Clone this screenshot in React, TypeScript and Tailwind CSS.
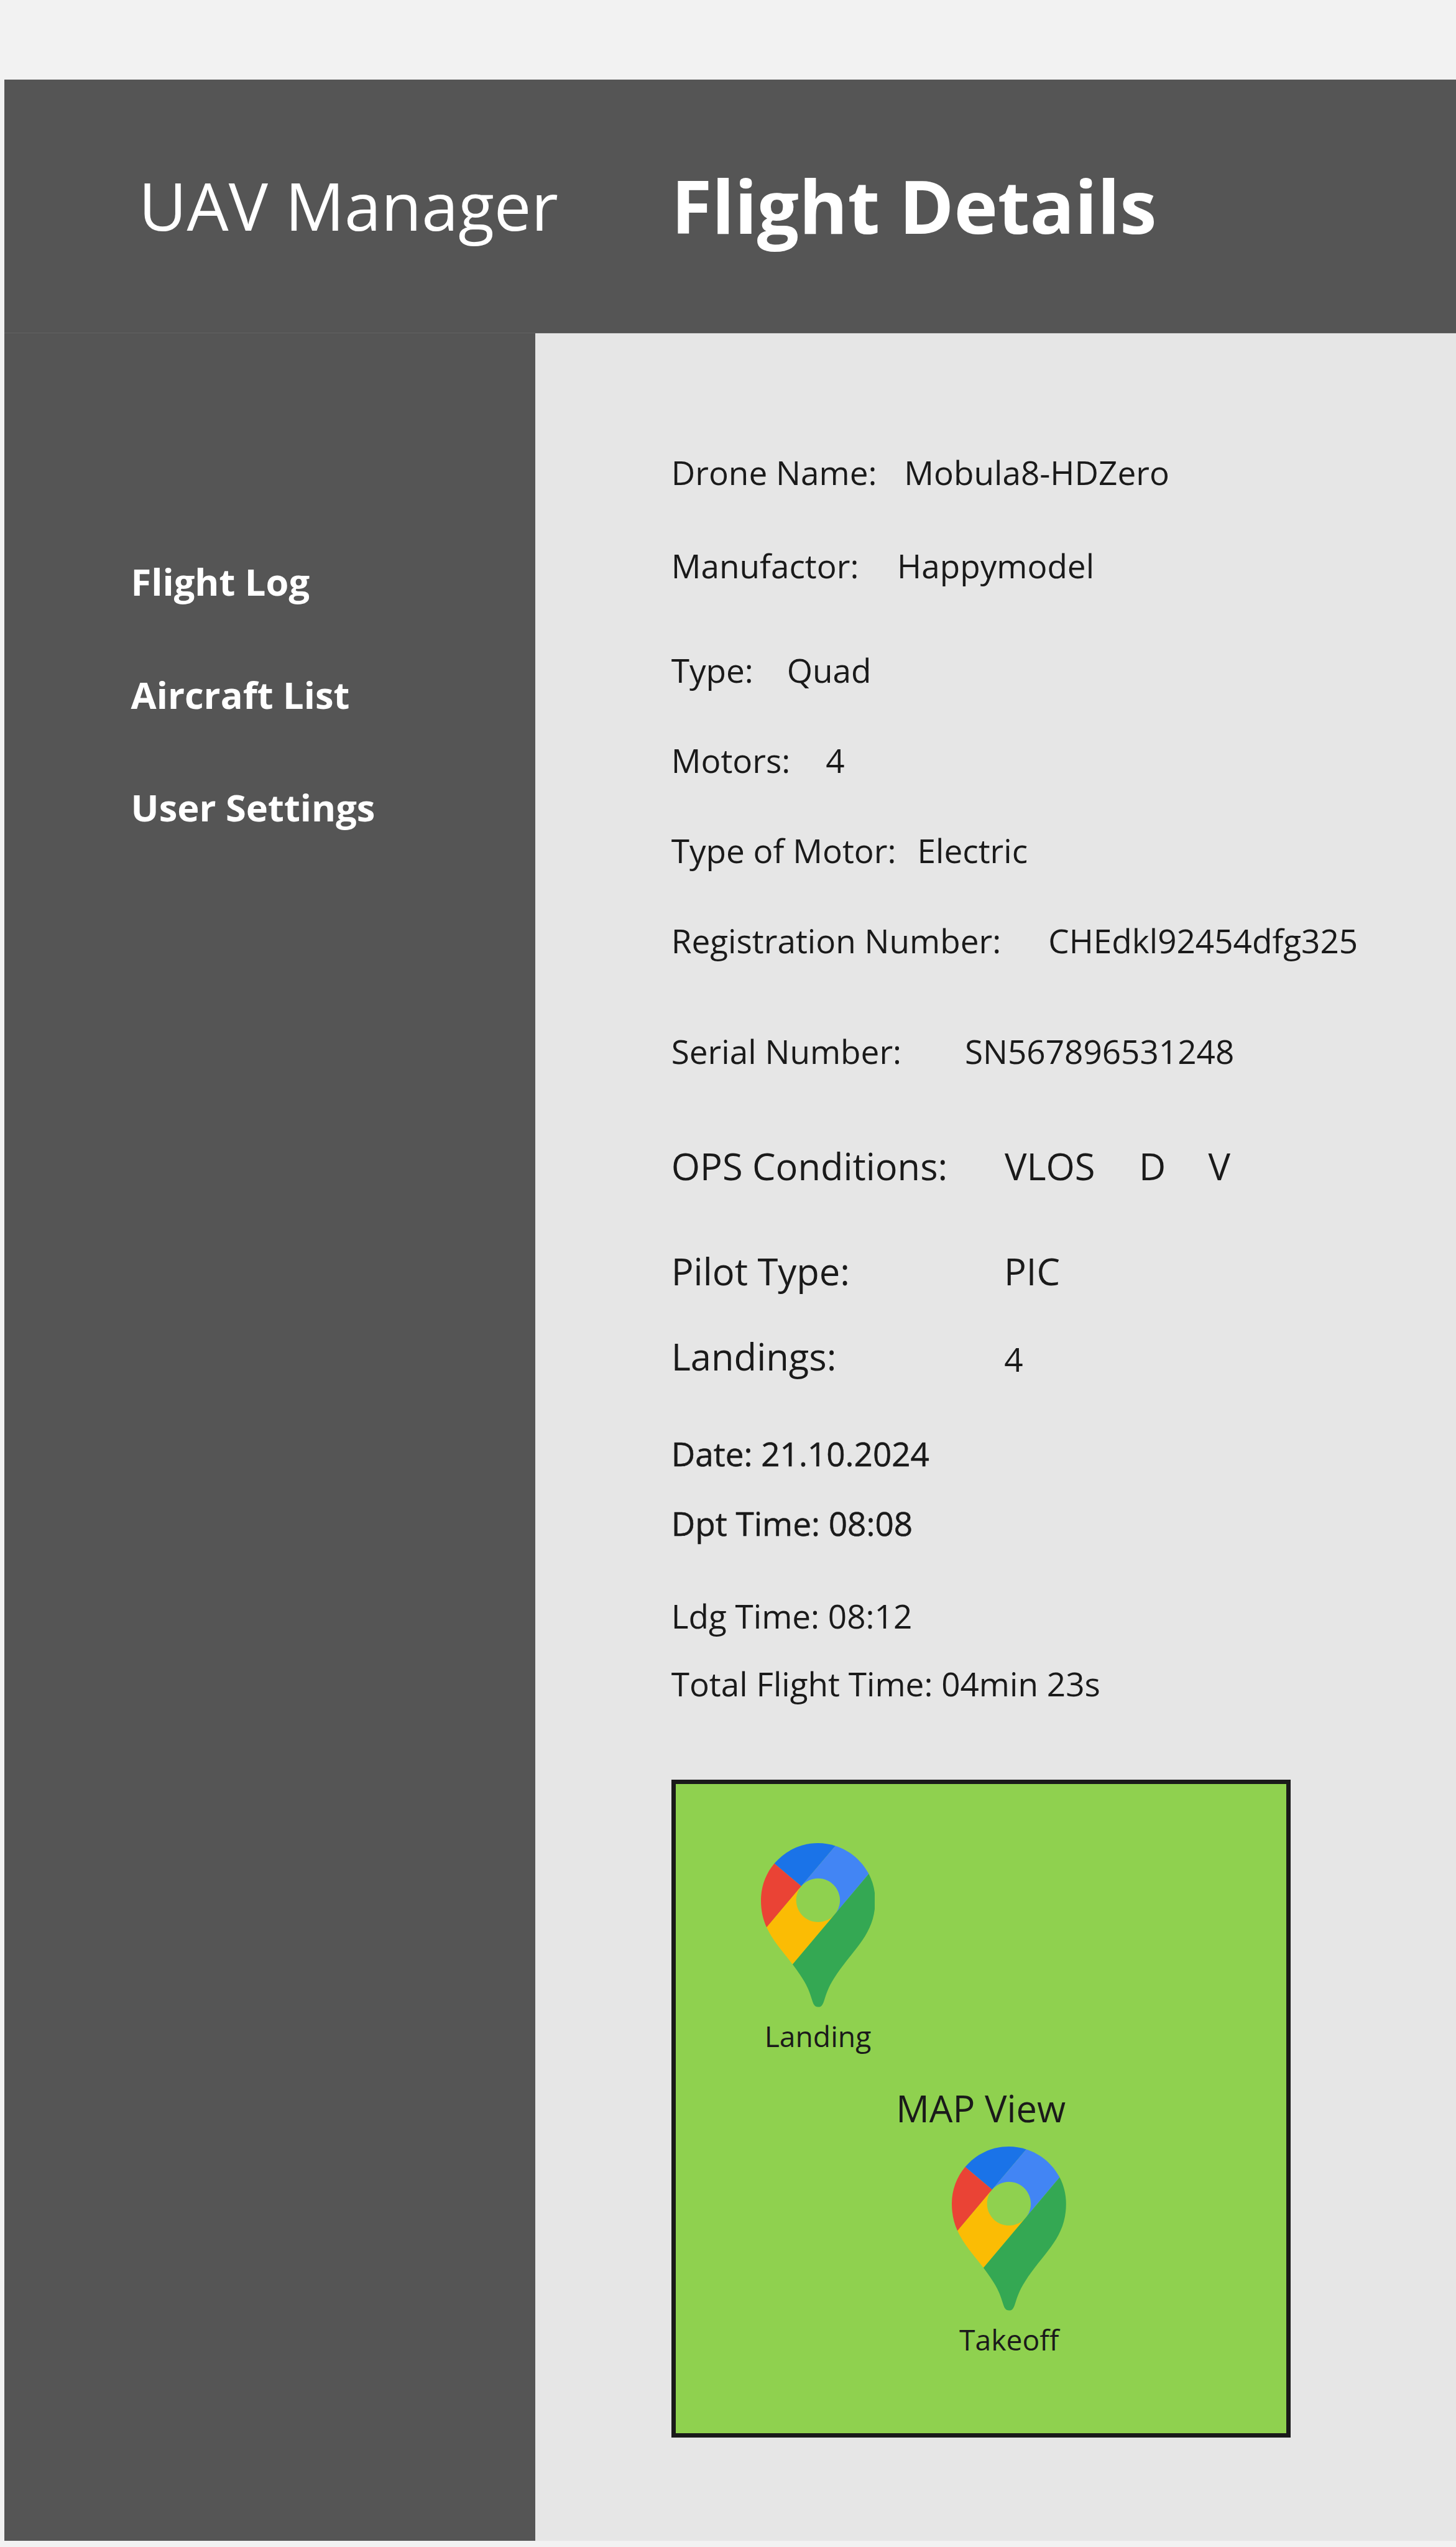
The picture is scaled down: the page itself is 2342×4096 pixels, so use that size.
type Detail = {
  label: string;
  row: string;
  labelWidth?: string;
  values?: { text: string; className?: string }[];
};

const navItems = ["Flight Log", "Aircraft List", "User Settings"];

const details: Detail[] = [
  { label: "Drone Name:", row: "text-[53.1px]", labelWidth: "w-[374.6px]", values: [{ text: "Mobula8-HDZero" }] },
  { label: "Manufactor:", row: "mt-[70px] text-[53.1px]", labelWidth: "w-[363.4px]", values: [{ text: "Happymodel" }] },
  { label: "Type:", row: "mt-[88px] text-[53.1px]", labelWidth: "w-[186px]", values: [{ text: "Quad" }] },
  { label: "Motors:", row: "mt-[65px] text-[53.1px]", labelWidth: "w-[248.5px]", values: [{ text: "4" }] },
  { label: "Type of Motor:", row: "mt-[65px] text-[53.1px]", labelWidth: "w-[395.8px]", values: [{ text: "Electric" }] },
  { label: "Registration Number:", row: "mt-[65px] text-[53.1px]", labelWidth: "w-[606.6px]", values: [{ text: "CHEdkl92454dfg325" }] },
  { label: "Serial Number:", row: "mt-[98px] text-[53.1px]", labelWidth: "w-[472.2px]", values: [{ text: "SN567896531248" }] },
  {
    label: "OPS Conditions:",
    row: "mt-[104px] text-[59.6px]",
    labelWidth: "w-[536.2px]",
    values: [
      { text: "VLOS", className: "w-[216.1px]" },
      { text: "D", className: "w-[111.6px]" },
      { text: "V" },
    ],
  },
  { label: "Pilot Type:", row: "mt-[89px] text-[59.7px]", labelWidth: "w-[535.2px]", values: [{ text: "PIC" }] },
  { label: "Landings:", row: "mt-[57px] text-[59.7px]", labelWidth: "w-[535.6px]", values: [{ text: "4", className: "pt-[5px] text-[53.1px]" }] },
  { label: "Date: 21.10.2024", row: "mt-[77px] text-[53.1px] [-webkit-text-stroke:0.5px_#1a1a1a]" },
  { label: "Dpt Time: 08:08", row: "mt-[32px] text-[53.1px] [-webkit-text-stroke:0.5px_#1a1a1a]" },
  { label: "Ldg Time: 08:12", row: "mt-[69px] text-[53.1px]" },
  { label: "Total Flight Time: 04min 23s", row: "mt-[29px] text-[53.1px]" },
];

function MapPin() {
  return (
    <svg viewBox="0 0 92.3 132.3" preserveAspectRatio="none" className="h-[263.4px] w-[183.6px]" aria-hidden="true">
      <path fill="#1a73e8" d="M60.2 2.2C55.8.8 51 0 46.1 0 32 0 19.3 6.4 10.8 16.5l21.8 18.3L60.2 2.2z" />
      <path fill="#ea4335" d="M10.8 16.5C4.1 24.5 0 34.9 0 46.1c0 8.7 1.7 15.7 4.6 22l28-33.3-21.8-18.3z" />
      <path fill="#4285f4" d="M46.2 28.5c9.8 0 17.7 7.9 17.7 17.7 0 4.3-1.6 8.3-4.2 11.4 0 0 13.9-16.6 27.5-32.7-5.6-10.8-15.3-19-27-22.7L32.6 34.8c3.3-3.8 8.1-6.3 13.6-6.3" />
      <path fill="#fbbc04" d="M46.2 63.8c-9.8 0-17.7-7.9-17.7-17.7 0-4.3 1.5-8.3 4.1-11.3l-28 33.3c4.8 10.6 12.8 19.2 21 29.9l34.1-40.5c-3.3 3.9-8.1 6.3-13.5 6.3" />
      <path fill="#34a853" d="M59.1 109.2c15.4-24.1 33.3-35 33.3-63 0-7.7-1.9-14.9-5.2-21.3L25.6 98c2.6 3.4 5.3 7.3 7.9 11.3 9.4 14.5 6.8 23.1 12.8 23.1s3.4-8.7 12.8-23.2" />
    </svg>
  );
}

function Marker({ label, position }: { label: string; position: string }) {
  return (
    <div className={`absolute flex flex-col items-center ${position}`}>
      <MapPin />
      <span className="mt-[15.8px] text-[46.24px] leading-[63px]">{label}</span>
    </div>
  );
}

export default function App() {
  return (
    <div className="flex h-[4096px] w-full flex-col overflow-hidden bg-[#f2f2f2] pt-32 pb-[10px] pl-[7px] font-['Open_Sans',sans-serif] text-[#1a1a1a]">
      <header className="flex h-[408px] shrink-0 items-start border-b border-[#626262] bg-[#555555] text-white">
        <div className="w-[1072.7px] pt-[129px] pl-[216.1px] text-[106.2px] leading-[145px]">UAV Manager</div>
        <h1 className="pt-[121px] text-[119.2px] leading-[163px] font-bold">Flight Details</h1>
      </header>

      <div className="flex min-h-0 grow">
        <nav className="flex w-[854px] shrink-0 flex-col gap-[101.6px] bg-[#555555] pt-[359px] pl-[203.6px] text-[59.6px] leading-[80px] font-bold text-white">
          {navItems.map((item) => (
            <a key={item}>{item}</a>
          ))}
        </nav>

        <main className="flex grow flex-col items-start bg-[#e6e6e6] pt-[184px] pl-[218.7px]">
          {details.map(({ label, row, labelWidth, values }) => (
            <div key={label} className={`flex h-20 items-start leading-[80px] whitespace-nowrap ${row}`}>
              <span className={`shrink-0 ${labelWidth ?? ""}`}>{label}</span>
              {values?.map(({ text, className }) => (
                <span key={text} className={`shrink-0 ${className ?? ""}`}>{text}</span>
              ))}
            </div>
          ))}

          <section className="relative mt-[114px] flex h-[1058px] w-[996px] items-center justify-center border-7 border-[#1a1a1a] bg-[#8fd14f] pb-[3px]">
            <h2 className="text-[59.6px] leading-[80px]">MAP View</h2>
            <Marker label="Landing" position="top-[95.2px] left-[137px]" />
            <Marker label="Takeoff" position="top-[583.2px] left-[444.8px]" />
          </section>
        </main>
      </div>
    </div>
  );
}
